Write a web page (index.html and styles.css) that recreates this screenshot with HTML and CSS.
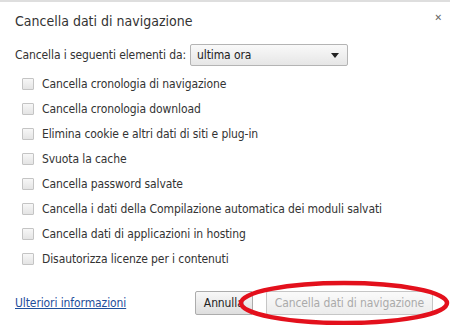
FILE: index.html
```html
<!DOCTYPE html>
<html lang="it">
<head>
    <meta charset="UTF-8">
    <title>Cancella dati di navigazione</title>
    <link rel="stylesheet" href="styles.css">
</head>
<body>
    <div class="dialog">
        <header class="dialog-header">
            <h1>Cancella dati di navigazione</h1>
            <span class="close">&#x2715;</span>
        </header>

        <div class="period-row">
            <label for="period">Cancella i seguenti elementi da:</label>
            <div class="select">
                <span>ultima ora</span>
                <span class="arrow"></span>
            </div>
        </div>

        <ul class="options">
            <li><span class="box"></span>Cancella cronologia di navigazione</li>
            <li><span class="box"></span>Cancella cronologia download</li>
            <li><span class="box"></span>Elimina cookie e altri dati di siti e plug-in</li>
            <li><span class="box"></span>Svuota la cache</li>
            <li><span class="box"></span>Cancella password salvate</li>
            <li><span class="box"></span>Cancella i dati della Compilazione automatica dei moduli salvati</li>
            <li><span class="box"></span>Cancella dati di applicazioni in hosting</li>
            <li><span class="box"></span>Disautorizza licenze per i contenuti</li>
        </ul>

        <footer class="dialog-footer">
            <a href="#" class="more">Ulteriori informazioni</a>
            <div class="buttons">
                <button class="btn">Annulla</button>
                <button class="btn" disabled>Cancella dati di navigazione</button>
            </div>
        </footer>

        <!-- hand-drawn highlight -->
        <svg class="mark" width="214" height="48" viewBox="0 0 214 48">
            <ellipse cx="107" cy="24" rx="103" ry="20" fill="none" stroke="#e3101c" stroke-width="4.5"/>
        </svg>
    </div>
</body>
</html>
```

FILE: styles.css
```css
body {
    margin: 0;
    background: #fff;
    font-family: "DejaVu Sans Condensed", "Liberation Sans", Arial, sans-serif;
    font-size: 12px;
    letter-spacing: -0.1px;
    color: #333;
}

.dialog {
    position: relative;
    height: 325px;
    box-sizing: border-box;
    border-top: 2px solid #dedede;
    padding: 9px 15px 0 15px;
}

.dialog-header {
    display: flex;
    justify-content: space-between;
    align-items: flex-start;
}

.dialog-header h1 {
    margin: 0;
    font-size: 14px;
    font-weight: normal;
    line-height: 20px;
    letter-spacing: 0;
    color: #333;
}

.close {
    font-size: 10px;
    font-weight: bold;
    color: #666;
    margin-top: 1px;
    margin-right: -7px;
}

.period-row {
    display: flex;
    align-items: center;
    gap: 4px;
    margin-top: 13px;
    height: 22px;
    white-space: nowrap;
}

.select {
    display: flex;
    align-items: center;
    justify-content: space-between;
    width: 158px;
    height: 22px;
    box-sizing: border-box;
    padding: 0 6px 0 6px;
    border: 1px solid #b4b4b4;
    border-radius: 2px;
    background: linear-gradient(#f9f9f9, #e6e6e6);
    color: #222;
}

.arrow {
    width: 0;
    height: 0;
    border-left: 4px solid transparent;
    border-right: 4px solid transparent;
    border-top: 5px solid #222;
    margin-right: 2px;
}

.options {
    list-style: none;
    margin: 5px 0 0 0;
    padding: 0;
}

.options li {
    display: flex;
    align-items: center;
    height: 25px;
    white-space: nowrap;
}

.box {
    width: 12px;
    height: 12px;
    box-sizing: border-box;
    border: 1px solid #c4c4c4;
    border-radius: 1px;
    background: linear-gradient(#f7f7f7, #e4e4e4);
    margin: 0 8px 0 7px;
}

.dialog-footer {
    display: flex;
    justify-content: space-between;
    align-items: center;
    margin-top: 20px;
    white-space: nowrap;
}

.more {
    color: #1f4f9c;
    text-decoration: underline;
}

.buttons {
    display: flex;
    gap: 13px;
    margin-right: 2px;
}

.btn {
    height: 24px;
    padding: 0 8px;
    font-family: inherit;
    font-size: 12px;
    letter-spacing: -0.1px;
    color: #222;
    border: 1px solid #acacac;
    border-radius: 2px;
    background: linear-gradient(#f8f8f8, #dedede);
}

.btn:disabled {
    color: #aaa;
    border-color: #c6c6c6;
    background: linear-gradient(#fafafa, #ececec);
}

.mark {
    position: absolute;
    left: 237px;
    top: 277px;
}
```
